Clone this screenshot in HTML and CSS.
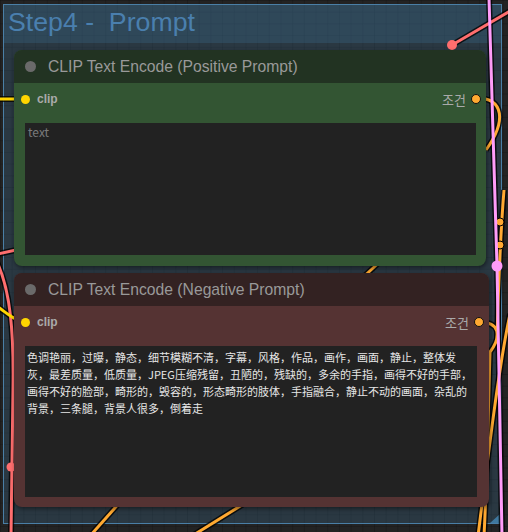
FILE: index.html
```html
<!DOCTYPE html>
<html>
<head>
<meta charset="utf-8">
<link rel="stylesheet" href="styles.css">
</head>
<body>
<div class="canvas">
  <div class="group">
    <div class="group-title">Step4 -&nbsp; Prompt</div>
    <div class="group-resize"></div>
  </div>

  <svg class="wires" width="508" height="532" viewBox="0 0 508 532">
    <g class="outline">
      <path d="M452,45 L512,10"/>
      <path d="M-2,254 L16,250"/>
      <path d="M-3,262 C10,290 14,330 13,390 L11,536"/>
      <path d="M0,99 L25,99"/>
      <path d="M-2,307 C8,314 14,320 25,322"/>
      <path d="M476,98 C505,98 506,122 486,150"/>
      <path d="M504,190 C500,240 498,300 497,340"/>
      <path d="M479,322 C500,322 502,336 490,352 C488,420 487,480 484,536"/>
      <path d="M510,314 C500,360 490,440 478,536"/>
      <path d="M358,282 L386,256"/>
      <path d="M122,500 L90,536"/>
      <path d="M250,500 L192,536"/>
      <path d="M489,-2 L497,266 L502,536"/>
    </g>
    <g class="vae">
      <path d="M452,45 L512,10"/>
      <path d="M-2,254 L16,250"/>
      <path d="M-3,262 C10,290 14,330 13,390 L11,536"/>
      <circle cx="452" cy="45" r="5"/>
      <circle cx="11" cy="467" r="4.5"/>
    </g>
    <g class="clipw">
      <path d="M0,99 L25,99"/>
      <path d="M-2,307 C8,314 14,320 25,322"/>
    </g>
    <g class="cond">
      <path d="M476,98 C505,98 506,122 486,150"/>
      <path d="M504,190 C500,240 498,300 497,340"/>
      <path d="M479,322 C500,322 502,336 490,352 C488,420 487,480 484,536"/>
      <path d="M510,314 C500,360 490,440 478,536"/>
      <path d="M358,282 L386,256"/>
      <path d="M122,500 L90,536"/>
      <path d="M250,500 L192,536"/>
      <circle cx="500" cy="222" r="4"/>
      <circle cx="500" cy="245" r="4"/>
    </g>
    <g class="latent">
      <path d="M489,-2 L497,266 L502,536"/>
    </g>
  </svg>

  <div class="node node-pos">
    <div class="node-title"><span class="node-dot"></span><span>CLIP Text Encode (Positive Prompt)</span></div>
    <div class="slots">
      <span class="slot-in"></span><span class="slot-label">clip</span>
      <span class="slot-out-label">조건</span><span class="slot-out"></span>
    </div>
    <div class="textbox tb-pos"><div class="placeholder">text</div></div>
  </div>

  <div class="node node-neg">
    <div class="node-title"><span class="node-dot"></span><span>CLIP Text Encode (Negative Prompt)</span></div>
    <div class="slots">
      <span class="slot-in"></span><span class="slot-label">clip</span>
      <span class="slot-out-label">조건</span><span class="slot-out"></span>
    </div>
    <div class="textbox tb-neg">色调艳丽，过曝，静态，细节模糊不清，字幕，风格，作品，画作，画面，静止，整体发灰，最差质量，低质量，JPEG压缩残留，丑陋的，残缺的，多余的手指，画得不好的手部，画得不好的脸部，畸形的，毁容的，形态畸形的肢体，手指融合，静止不动的画面，杂乱的背景，三条腿，背景人很多，倒着走</div>
  </div>

  <svg class="overlay" width="508" height="532" viewBox="0 0 508 532">
    <circle cx="497" cy="266" r="5.5" fill="#ff9cf9"/>
  </svg>
</div>
</body>
</html>
```
FILE: styles.css
```css
* { box-sizing: border-box; }
html, body { margin: 0; padding: 0; background: #232323; }

.canvas {
  position: relative;
  width: 508px;
  height: 532px;
  overflow: hidden;
  background-color: #232323;
  background-image:
    linear-gradient(to right, rgba(0,0,0,0.16) 1px, transparent 1px),
    linear-gradient(to bottom, rgba(0,0,0,0.16) 1px, transparent 1px);
  background-size: 11.7px 11.7px;
  font-family: "Liberation Sans", Arial, "Noto Sans CJK KR", sans-serif;
}

.group {
  position: absolute;
  left: 3px;
  top: 4px;
  width: 499px;
  height: 520px;
  border: 1px solid #4a7fa6;
  background: rgba(63,120,158,0.25);
}
.group-title {
  height: 38px;
  padding: 2px 0 0 4px;
  font-size: 26.7px;
  line-height: 30px;
  color: #4a7fae;
  background: rgba(63,120,158,0.25);
  white-space: nowrap;
}
.group-resize {
  position: absolute;
  right: 1px;
  bottom: 0;
  width: 0;
  height: 0;
  border-style: solid;
  border-width: 0 0 9px 10px;
  border-color: transparent transparent #3f789e transparent;
}

.wires, .overlay {
  position: absolute;
  left: 0;
  top: 0;
}
.overlay { z-index: 3; }
.wires path { fill: none; }
.wires .outline path { stroke: rgba(0,0,0,0.75); stroke-width: 6; }
.wires .vae path { stroke: #ff6e6e; stroke-width: 3; }
.wires .vae circle { fill: #ff6e6e; }
.wires .clipw path { stroke: #ffd500; stroke-width: 3; }
.wires .cond path { stroke: #ffa931; stroke-width: 3; }
.wires .cond circle { fill: #ffa931; stroke: #000; stroke-width: 1; }
.wires .latent path { stroke: #ff9cf9; stroke-width: 3; }

.node {
  position: absolute;
  left: 14px;
  display: flex;
  flex-direction: column;
  border-radius: 8px;
  box-shadow: 1px 2px 4px rgba(0,0,0,0.45);
  z-index: 2;
}
.node-pos { top: 50px; width: 472px; height: 216px; background: #335533; }
.node-neg { top: 273px; width: 475px; height: 234px; background: #553333; }

.node-title {
  height: 33px;
  display: flex;
  align-items: center;
  gap: 12px;
  padding-left: 11px;
  border-radius: 8px 8px 0 0;
  font-size: 15.7px;
  color: #999;
  white-space: nowrap;
}
.node-pos .node-title { background: #223322; }
.node-neg .node-title { background: #332222; }
.node-dot {
  width: 11px;
  height: 11px;
  border-radius: 50%;
  background: #6a6a6a;
  flex: none;
}

.slots {
  height: 32px;
  display: flex;
  align-items: center;
  padding: 0 5px 0 7px;
  font-size: 12px;
  color: #aaa;
}
.slot-in {
  width: 9px;
  height: 9px;
  border-radius: 50%;
  background: #ffd500;
  flex: none;
}
.slot-label {
  margin-left: 7px;
  font-weight: bold;
  flex: 1;
}
.slot-out-label {
  font-family: "Liberation Sans", "Noto Sans CJK KR", sans-serif;
  font-size: 13px;
  margin-right: 5px;
}
.slot-out {
  width: 10px;
  height: 10px;
  border-radius: 50%;
  background: #ffa931;
  border: 1px solid #111;
  flex: none;
}

.textbox {
  margin: 8px 10px 0 11px;
  background: #222;
  font-family: "Noto Sans CJK SC", sans-serif;
  font-size: 11px;
  line-height: 17px;
  color: #e6e6e6;
  padding: 2px 2px;
}
.tb-pos { height: 132px; }
.tb-neg { height: 151px; margin-right: 12px; padding-top: 3px; }
.placeholder {
  color: #7a7a7a;
  font-size: 12px;
  line-height: 13px;
  padding-left: 1px;
}
```
